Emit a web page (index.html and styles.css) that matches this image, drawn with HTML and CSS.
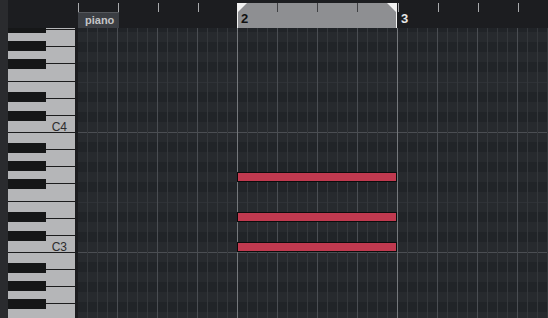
FILE: index.html
```html
<!DOCTYPE html>
<html>
<head>
<meta charset="utf-8">
<link rel="stylesheet" href="styles.css">
</head>
<body>
<div class="app">
  <div class="gutter"></div>
  <div class="corner"></div>
  <div class="ruler">
    <div class="track-label">piano</div>
    <div class="loop">
      <span class="loop-num">2</span>
    </div>
    <span class="bar-num bar3">3</span>
  </div>
  <div class="keys">
    <svg width="67" height="290" viewBox="8 28 67 290" xmlns="http://www.w3.org/2000/svg">
      <rect x="8" y="28" width="67" height="290" fill="#b5b6b8"/>
      <g fill="#1c1c1d">
        <rect x="8" y="132" width="67" height="1"/>
        <rect x="8" y="252" width="67" height="1"/>
        <rect x="8" y="81" width="67" height="1"/>
        <rect x="8" y="201" width="67" height="1"/>
        <rect x="8" y="321" width="67" height="1"/>
        <rect x="46" y="115" width="29" height="1"/>
        <rect x="46" y="98" width="29" height="1"/>
        <rect x="46" y="63" width="29" height="1"/>
        <rect x="46" y="46" width="29" height="1"/>
        <rect x="46" y="29" width="29" height="1"/>
        <rect x="46" y="235" width="29" height="1"/>
        <rect x="46" y="218" width="29" height="1"/>
        <rect x="46" y="183" width="29" height="1"/>
        <rect x="46" y="166" width="29" height="1"/>
        <rect x="46" y="149" width="29" height="1"/>
        <rect x="46" y="303" width="29" height="1"/>
        <rect x="46" y="286" width="29" height="1"/>
        <rect x="46" y="269" width="29" height="1"/>
      </g>
      <g fill="#161718">
        <rect x="8" y="23" width="38" height="10"/>
        <rect x="8" y="41" width="38" height="10"/>
        <rect x="8" y="59" width="38" height="10"/>
        <rect x="8" y="92" width="38" height="10"/>
        <rect x="8" y="111" width="38" height="10"/>
        <rect x="8" y="143" width="38" height="10"/>
        <rect x="8" y="161" width="38" height="10"/>
        <rect x="8" y="179" width="38" height="10"/>
        <rect x="8" y="212" width="38" height="10"/>
        <rect x="8" y="231" width="38" height="10"/>
        <rect x="8" y="263" width="38" height="10"/>
        <rect x="8" y="281" width="38" height="10"/>
        <rect x="8" y="299" width="38" height="10"/>
      </g>
      <text class="key-label" x="67" y="131" text-anchor="end">C4</text>
      <text class="key-label" x="67" y="251" text-anchor="end">C3</text>
    </svg>
  </div>
  <div class="sep"></div>
  <div class="grid">
    <div class="rows">
      <div class="row b"></div>
      <div class="row w"></div>
      <div class="row b"></div>
      <div class="row w"></div>
      <div class="row b"></div>
      <div class="row w"></div>
      <div class="row w ef"></div>
      <div class="row b"></div>
      <div class="row w"></div>
      <div class="row b"></div>
      <div class="row w"></div>
      <div class="row w oct"></div>
      <div class="row b"></div>
      <div class="row w"></div>
      <div class="row b"></div>
      <div class="row w"></div>
      <div class="row b"></div>
      <div class="row w"></div>
      <div class="row w ef"></div>
      <div class="row b"></div>
      <div class="row w"></div>
      <div class="row b"></div>
      <div class="row w"></div>
      <div class="row w oct"></div>
      <div class="row b"></div>
      <div class="row w"></div>
      <div class="row b"></div>
      <div class="row w"></div>
      <div class="row b"></div>
      <div class="row w"></div>
      <div class="row w ef"></div>
    </div>
    <div class="vlines"></div>
    <div class="note" style="top:144px"></div>
    <div class="note" style="top:184px"></div>
    <div class="note" style="top:214px"></div>
  </div>
</div>
</body>
</html>
```
FILE: styles.css
```css
html, body {
  margin: 0;
  padding: 0;
  background: #1c1d20;
  overflow: hidden;
}

.app {
  width: 548px;
  height: 318px;
  display: grid;
  grid-template-columns: 8px 67px 3px 1fr;
  grid-template-rows: 28px 1fr;
  font-family: "Liberation Sans", Arial, sans-serif;
}

.gutter {
  grid-column: 1;
  grid-row: 1 / 3;
  background: #2a2b2e;
}

.corner {
  grid-column: 2 / 4;
  grid-row: 1;
  background: #1c1d20;
}

.ruler {
  grid-column: 4;
  grid-row: 1;
  position: relative;
  background-color: #1c1d20;
  background-image: linear-gradient(to right, #a9aaad 1px, transparent 1px);
  background-size: 40px 9px;
  background-position: 0 3px;
  background-repeat: repeat-x;
}

.track-label {
  position: absolute;
  left: 0;
  top: 12px;
  width: 41px;
  height: 16px;
  box-sizing: border-box;
  background: #3b3e43;
  border-top: 1px solid #55585d;
  color: #c3c4c6;
  font-size: 11px;
  font-weight: bold;
  line-height: 14px;
  padding-left: 7px;
}

.loop {
  position: absolute;
  left: 159px;
  top: 3px;
  width: 160px;
  height: 25px;
  box-sizing: border-box;
  background-color: #8e8f92;
  background-image: linear-gradient(to right, #3e3f42 1px, transparent 1px);
  background-size: 40px 9px;
  background-position: 39px 0;
  background-repeat: repeat-x;
  border-left: 1px solid #f2f2f2;
  border-right: 1px solid #f2f2f2;
}

.loop::before,
.loop::after {
  content: "";
  position: absolute;
  top: 0;
  width: 0;
  height: 0;
  border-top: 9px solid #f2f2f2;
}

.loop::before {
  left: 0;
  border-right: 9px solid transparent;
}

.loop::after {
  right: 0;
  border-left: 9px solid transparent;
}

.loop-num {
  position: absolute;
  left: 3px;
  top: 9px;
  font-size: 13px;
  font-weight: bold;
  color: #111;
  line-height: 14px;
}

.bar-num {
  position: absolute;
  top: 12px;
  font-size: 13px;
  font-weight: bold;
  color: #e6e6e6;
  line-height: 14px;
}

.bar3 {
  left: 323px;
}

.keys {
  grid-column: 2;
  grid-row: 2;
  overflow: hidden;
  line-height: 0;
}

.key-label {
  font-family: "Liberation Sans", Arial, sans-serif;
  font-size: 12px;
  fill: #2c2c2d;
}

.sep {
  grid-column: 3;
  grid-row: 2;
  background: #1b1c1f;
}

.grid {
  grid-column: 4;
  grid-row: 2;
  position: relative;
  overflow: hidden;
}

.rows {
  display: flex;
  flex-direction: column;
  margin-top: -6px;
}

.row {
  height: 10px;
  box-sizing: border-box;
  flex: none;
}

.row.w {
  background: #272a2e;
}

.row.b {
  background: #212428;
}

.row.oct {
  border-top: 1px solid #4b4e53;
}

.row.ef {
  border-top: 1px solid #2f3237;
}

.vlines {
  position: absolute;
  inset: 0;
  background-image:
    linear-gradient(to right, #74777b 1px, transparent 1px),
    linear-gradient(to right, #4a4d52 1px, transparent 1px),
    linear-gradient(to right, #34373b 1px, transparent 1px);
  background-size: 160px 100%, 40px 100%, 10px 100%;
  background-position: -1px 0, -1px 0, -1px 0;
}

.note {
  position: absolute;
  left: 159px;
  width: 160px;
  height: 10px;
  box-sizing: border-box;
  background: #c0394f;
  border: 1px solid #0c0c0c;
}
```
